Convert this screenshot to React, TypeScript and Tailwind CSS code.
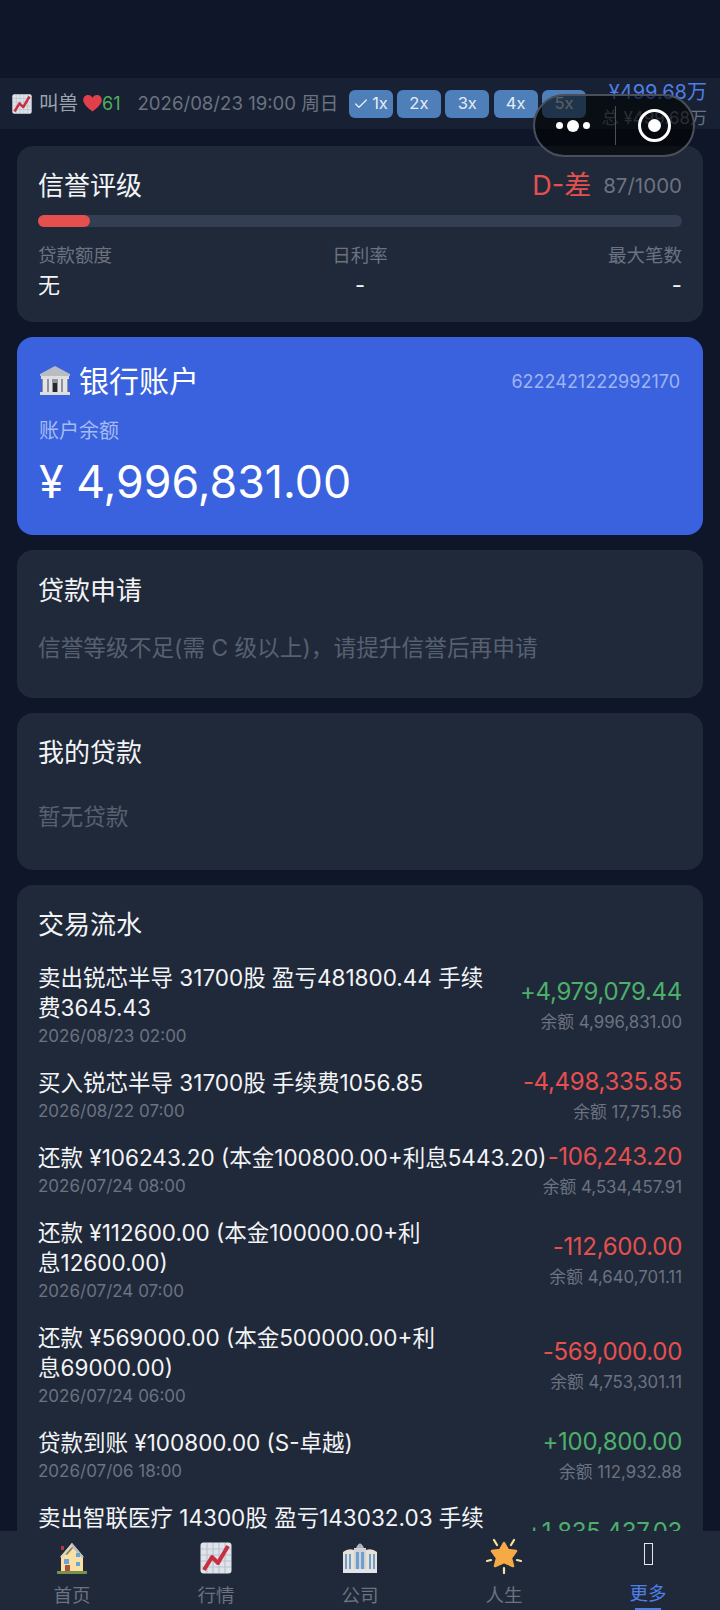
import { Check } from "lucide-react";

const font = { fontFamily: 'Inter, "Noto Sans CJK SC", sans-serif' };

function ChartIcon({ size = 24 }: { size?: number }) {
  return (
    <svg width={size} height={size} viewBox="0 0 32 32">
      <rect x="0.5" y="0.5" width="31" height="31" rx="3" fill="#dfe3ea" />
      <path d="M1 7h30M1 13h30M1 19h30M1 25h30M7 1v30M13 1v30M19 1v30M25 1v30" stroke="#bcc3cf" strokeWidth="1.2" />
      <path d="M4 28 L12 15 L18 21 L28 4" fill="none" stroke="#c9303f" strokeWidth="4" strokeLinejoin="round" />
    </svg>
  );
}

function BankIcon() {
  return (
    <svg width="32" height="30" viewBox="0 0 32 30">
      <path d="M16 0 L31 8 V10 H1 V8 Z" fill="#b9bcc2" />
      <rect x="2" y="10" width="28" height="3" fill="#dcdee2" />
      <rect x="3" y="13" width="26" height="13" fill="#8f9298" />
      <path d="M4 13h4v13H4zM10 13h3v13h-3zM19 13h3v13h-3zM24 13h4v13h-4z" fill="#e3e4e7" />
      <rect x="14" y="17" width="4" height="9" fill="#26282c" />
      <rect x="1" y="26" width="30" height="3" fill="#dcdee2" />
    </svg>
  );
}

function HouseIcon() {
  return (
    <svg width="30" height="32" viewBox="0 0 30 32">
      <path d="M4 14 L15 1 L26 14 V29 H4 Z" fill="#fbe0a6" />
      <path d="M16 2 L8 12 L10 13 L17 5 Z" fill="#8a7a5c" />
      <path d="M15 1 L27 15 L25 16 L15 5 Z" fill="#b9bdc4" />
      <path d="M15 1 L3 15 L5 16 L15 5 Z" fill="#d9d3c0" />
      <rect x="4" y="4" width="3" height="4" fill="#a9403f" />
      <rect x="7" y="17" width="5" height="5" fill="#69a6d6" />
      <rect x="19" y="11" width="4" height="4" fill="#69a6d6" />
      <rect x="19" y="20" width="4" height="4" fill="#69a6d6" />
      <rect x="8" y="23" width="5" height="6" fill="#a8533f" />
      <rect x="0" y="29" width="30" height="3" fill="#77914d" />
    </svg>
  );
}

function OfficeIcon() {
  return (
    <svg width="36" height="32" viewBox="0 0 36 32">
      <path d="M1 10 Q6 6 12 8 V31 H1 Z" fill="#e8e2d2" />
      <path d="M35 10 Q30 6 24 8 V31 H35 Z" fill="#e8e2d2" />
      <rect x="12" y="6" width="12" height="25" fill="#cfd3d8" />
      <path d="M14 6 Q18 -3 22 6 Z" fill="#aeb4bc" />
      <path d="M3 12h2v15H3zM7 12h2v15H7zM14 10h3v17h-3zM19 10h3v17h-3zM27 12h2v15h-2zM31 12h2v15h-2z" fill="#6f9fd0" />
      <rect x="1" y="27" width="34" height="4" fill="#e2e4e6" />
    </svg>
  );
}

function StarIcon() {
  return (
    <svg width="36" height="36" viewBox="0 0 36 36">
      <path d="M18 5 L22 12 L30 13 L25 20 L27 28 L18 24 L9 28 L11 20 L6 13 L14 12 Z" fill="#f5aa45" strokeLinejoin="round" stroke="#f5aa45" strokeWidth="2.5" />
      <path d="M18 30v5M1 23l4-1M35 23l-4-1M8 2l3 5M28 2l-3 5" stroke="#f2e3a8" strokeWidth="2.2" strokeLinecap="round" />
    </svg>
  );
}

const speeds = ["1x", "2x", "3x", "4x", "5x"];

const rows = [
  { lines: ["卖出锐芯半导 31700股 盈亏481800.44 手续", "费3645.43"], time: "2026/08/23 02:00", amount: "+4,979,079.44", balance: "余额 4,996,831.00", up: true },
  { lines: ["买入锐芯半导 31700股 手续费1056.85"], time: "2026/08/22 07:00", amount: "-4,498,335.85", balance: "余额 17,751.56", up: false },
  { lines: ["还款 ¥106243.20 (本金100800.00+利息5443.20)"], time: "2026/07/24 08:00", amount: "-106,243.20", balance: "余额 4,534,457.91", up: false },
  { lines: ["还款 ¥112600.00 (本金100000.00+利", "息12600.00)"], time: "2026/07/24 07:00", amount: "-112,600.00", balance: "余额 4,640,701.11", up: false },
  { lines: ["还款 ¥569000.00 (本金500000.00+利", "息69000.00)"], time: "2026/07/24 06:00", amount: "-569,000.00", balance: "余额 4,753,301.11", up: false },
  { lines: ["贷款到账 ¥100800.00 (S-卓越)"], time: "2026/07/06 18:00", amount: "+100,800.00", balance: "余额 112,932.88", up: true },
  { lines: ["卖出智联医疗 14300股 盈亏143032.03 手续", "费1835.06"], time: "2026/07/05 18:00", amount: "+1,835,437.03", balance: "余额 12,132.88", up: true },
];

const tabs = [
  { label: "首页", icon: <HouseIcon /> },
  { label: "行情", icon: <ChartIcon size={32} /> },
  { label: "公司", icon: <OfficeIcon /> },
  { label: "人生", icon: <StarIcon /> },
];

export default function App() {
  return (
    <div className="relative flex h-[1610px] w-[720px] flex-col overflow-hidden bg-[#0f1629] pt-[78px]" style={font}>
      {/* top status bar */}
      <div className="flex h-[51px] shrink-0 items-center bg-[#182133] pl-[12px]">
        <ChartIcon size={20} />
        <span className="ml-[7px] text-[19.5px] text-[#9ca3af]">叫兽</span>
        <svg className="ml-[5px]" width="19" height="17" viewBox="0 0 24 22">
          <path d="M12 21.5 C4 15 0 11 0 6.5 C0 2.5 3 0 6.5 0 C9 0 11 1.5 12 3.5 C13 1.5 15 0 17.5 0 C21 0 24 2.5 24 6.5 C24 11 20 15 12 21.5 Z" fill="#e0404b" />
        </svg>
        <span className="text-[18px] text-[#4fae5c]">61</span>
        <span className="ml-[17px] w-[202px] whitespace-nowrap text-[18.6px] text-[#6b7280]">2026/08/23 19:00 周日</span>
        <div className="ml-[9px] flex gap-[4.4px]">
          {speeds.map((s, i) => (
            <div key={s} className="flex h-[28px] w-[44px] items-center justify-center gap-[3px] rounded-[6px] bg-[#4f7fb8] text-[16.5px] text-[#e5edf7]">
              {i === 0 && <Check size={16} strokeWidth={2} />}
              {s}
            </div>
          ))}
        </div>
        <div className="ml-auto flex flex-col items-end pr-[13px]">
          <span className="text-[20px] leading-[28px] text-[#4f7fe6]">¥499.68万</span>
          <span className="text-[17px] leading-[24px] text-[#6b7280]">总 ¥499.68万</span>
        </div>
      </div>

      {/* scroll content */}
      <div className="flex min-h-0 flex-1 flex-col gap-[15px] overflow-hidden px-[17px] pt-[17px]">
        <div className="shrink-0 rounded-[16px] bg-[#20293a] px-[21px] pt-[20px] pb-[21px]">
          <div className="flex items-center justify-between">
            <span className="text-[26px] leading-[40px] text-[#f3f4f6]">信誉评级</span>
            <div className="flex items-center gap-[12px]">
              <span className="text-[27px] leading-[40px] text-[#e5504f]">D-差</span>
              <span className="text-[20.5px] text-[#6b7280]">87/1000</span>
            </div>
          </div>
          <div className="mt-[9px] h-[12px] w-full rounded-full bg-[#343e52]">
            <div className="h-full w-[8%] rounded-full bg-[#e5504f]" />
          </div>
          <div className="mt-[14px] flex justify-between">
            <div className="flex flex-col items-start">
              <span className="text-[18.5px] leading-[28px] text-[#6b7280]">贷款额度</span>
              <span className="text-[22px] leading-[32px] text-[#f3f4f6]">无</span>
            </div>
            <div className="flex flex-col items-center">
              <span className="text-[18.5px] leading-[28px] text-[#6b7280]">日利率</span>
              <span className="text-[22px] leading-[32px] text-[#f3f4f6]">-</span>
            </div>
            <div className="flex flex-col items-end">
              <span className="text-[18.5px] leading-[28px] text-[#6b7280]">最大笔数</span>
              <span className="text-[22px] leading-[32px] text-[#f3f4f6]">-</span>
            </div>
          </div>
        </div>

        <div className="shrink-0 rounded-[16px] bg-[#3a62de] pt-[23px] pr-[23px] pb-[20px] pl-[22px]">
          <div className="flex items-center justify-between">
            <div className="flex items-center gap-[8px]">
              <BankIcon />
              <span className="text-[30px] leading-[42px] text-white">银行账户</span>
            </div>
            <span className="text-[18px] text-[#9db4f2]">6222421222992170</span>
          </div>
          <div className="mt-[15px] text-[20px] leading-[28px] text-[#a5bbf4]">账户余额</div>
          <div className="mt-[4px] text-[44.7px] leading-[66px] text-white">¥ 4,996,831.00</div>
        </div>

        <div className="h-[148px] shrink-0 rounded-[16px] bg-[#20293a] px-[21px] pt-[22px]">
          <div className="text-[26px] leading-[38px] text-[#f3f4f6]">贷款申请</div>
          <div className="mt-[21px] text-[22.7px] leading-[34px] text-[#576070]">信誉等级不足(需 C 级以上)，请提升信誉后再申请</div>
        </div>

        <div className="h-[157px] shrink-0 rounded-[16px] bg-[#20293a] px-[21px] pt-[21px]">
          <div className="text-[26px] leading-[38px] text-[#f3f4f6]">我的贷款</div>
          <div className="mt-[29px] text-[22.6px] leading-[32px] text-[#576070]">暂无贷款</div>
        </div>

        <div className="shrink-0 rounded-[16px] bg-[#20293a] px-[21px] pt-[21px]">
          <div className="text-[26px] leading-[38px] text-[#f3f4f6]">交易流水</div>
          <div className="mt-[19px] flex flex-col gap-[19px]">
            {rows.map((r) => (
              <div key={r.time + r.amount} className="flex items-center justify-between">
                <div className="min-w-0">
                  {r.lines.map((line) => (
                    <div key={line} className="whitespace-nowrap text-[22.5px] leading-[30px] text-[#f3f4f6]">{line}</div>
                  ))}
                  <div className="text-[17px] leading-[26px] text-[#6b7280]">{r.time}</div>
                </div>
                <div className="-my-[2px] flex shrink-0 flex-col items-end">
                  <span className={`text-[24px] leading-[32px] tracking-[-0.3px] ${r.up ? "text-[#4caf6a]" : "text-[#e5504f]"}`}>{r.amount}</span>
                  <span className="text-[16.8px] leading-[28px] text-[#6b7280]">{r.balance}</span>
                </div>
              </div>
            ))}
          </div>
        </div>
      </div>

      {/* bottom tabs */}
      <div className="relative flex h-[79px] shrink-0 bg-[#20293a]">
        {tabs.map((t) => (
          <div key={t.label} className="flex w-[144px] flex-col items-center">
            <div className="flex h-[43px] items-end justify-center">{t.icon}</div>
            <span className="mt-[9px] text-[18.5px] leading-[24px] text-[#6b7280]">{t.label}</span>
          </div>
        ))}
        <div className="flex w-[144px] flex-col items-center">
          <div className="mt-[12px] h-[22px] w-[9px] border border-[#e5e7eb]" />
          <span className="mt-[16px] text-[18.5px] leading-[24px] text-[#4f7fe6]">更多</span>
          <div className="mt-[3px] h-[2px] w-[26px] bg-[#4f7fe6]" />
        </div>
      </div>

      {/* wechat capsule */}
      <div className="absolute top-[94px] left-[533px] flex h-[63px] w-[162px] items-center rounded-full border-2 border-[#4a4f59] bg-black/60">
        <div className="flex w-[80px] items-center justify-center gap-[4px] pr-[4px]">
          <div className="h-[7px] w-[7px] rounded-full bg-white" />
          <div className="h-[12px] w-[12px] rounded-full bg-white" />
          <div className="h-[7px] w-[7px] rounded-full bg-white" />
        </div>
        <div className="h-[39px] w-px bg-[#4a4f59]" />
        <div className="flex flex-1 items-center justify-center">
          <div className="flex h-[33px] w-[33px] items-center justify-center rounded-full border-[3px] border-white">
            <div className="h-[13px] w-[13px] rounded-full bg-white" />
          </div>
        </div>
      </div>
    </div>
  );
}
